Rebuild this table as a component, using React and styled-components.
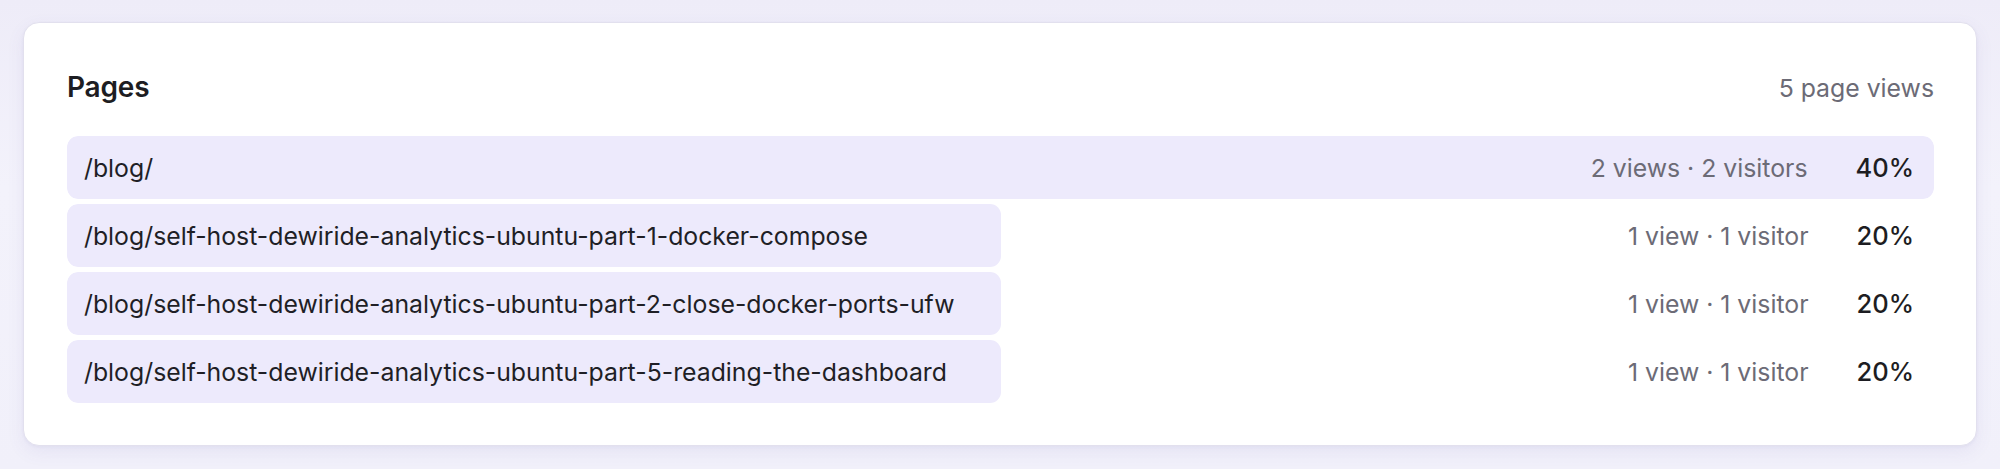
import React from 'react';
import styled, { createGlobalStyle } from 'styled-components';

const GlobalStyle = createGlobalStyle`
  html, body {
    margin: 0;
    padding: 0;
    background: #f2f1fa;
  }

  body {
    font-family: Inter, 'Noto Sans', sans-serif;
    -webkit-font-smoothing: antialiased;
  }
`;

const Page = styled.div`
  min-height: 469px;
  box-sizing: border-box;
  padding: 22px 23px 23px;
  background: linear-gradient(180deg, #eeecf8 0%, #f3f2fb 40%, #f1f0fa 100%);
`;

const Card = styled.section`
  box-sizing: border-box;
  height: 424px;
  background: #ffffff;
  border: 1px solid #e2e0ee;
  border-radius: 16px;
  box-shadow: 0 6px 18px rgba(90, 80, 160, 0.08), 0 1px 3px rgba(90, 80, 160, 0.06);
  padding: 47px 42px 40px 43px;
`;

const Header = styled.header`
  display: flex;
  align-items: baseline;
  justify-content: space-between;
  margin-bottom: 32px;
`;

const Title = styled.h2`
  margin: 0;
  font-size: 28px;
  line-height: 34px;
  font-weight: 600;
  color: #1d1d22;
  letter-spacing: -0.2px;
`;

const Total = styled.span`
  font-size: 24.8px;
  line-height: 30px;
  color: #6c6b76;
`;

const List = styled.ul`
  list-style: none;
  margin: 0;
  padding: 0;
  display: flex;
  flex-direction: column;
  gap: 5px;
`;

const Row = styled.li`
  position: relative;
  height: 63px;
  display: flex;
  align-items: center;
  padding: 0 20px 0 17px;
  border-radius: 11px;
  overflow: hidden;
`;

const Bar = styled.div`
  position: absolute;
  left: 0;
  top: 0;
  bottom: 0;
  background: #edeafc;
  border-radius: 11px;
`;

const Path = styled.span`
  position: relative;
  flex: 1;
  font-size: 24.8px;
  color: #1f1f26;
  white-space: nowrap;
`;

const Stats = styled.span`
  position: relative;
  font-size: 24.8px;
  color: #6c6b76;
  white-space: nowrap;
`;

const Percent = styled.span`
  position: relative;
  min-width: 56px;
  margin-left: 48px;
  text-align: right;
  font-size: 25.5px;
  font-weight: 500;
  color: #1d1d22;
`;

const pages = [
  { path: '/blog/', views: 2, visitors: 2 },
  { path: '/blog/self-host-dewiride-analytics-ubuntu-part-1-docker-compose', views: 1, visitors: 1 },
  { path: '/blog/self-host-dewiride-analytics-ubuntu-part-2-close-docker-ports-ufw', views: 1, visitors: 1 },
  { path: '/blog/self-host-dewiride-analytics-ubuntu-part-5-reading-the-dashboard', views: 1, visitors: 1 },
];

const plural = (n, word) => `${n} ${word}${n === 1 ? '' : 's'}`;

const App = () => {
  const total = pages.reduce((sum, p) => sum + p.views, 0);
  const max = Math.max(...pages.map((p) => p.views));

  return (
    <>
      <GlobalStyle />
      <Page>
        <Card>
          <Header>
            <Title>Pages</Title>
            <Total>{total} page views</Total>
          </Header>
          <List>
            {pages.map((p) => (
              <Row key={p.path}>
                <Bar style={{ width: `${(p.views / max) * 100}%` }} />
                <Path>{p.path}</Path>
                <Stats>
                  {plural(p.views, 'view')} · {plural(p.visitors, 'visitor')}
                </Stats>
                <Percent>{Math.round((p.views / total) * 100)}%</Percent>
              </Row>
            ))}
          </List>
        </Card>
      </Page>
    </>
  );
};

export default App;
